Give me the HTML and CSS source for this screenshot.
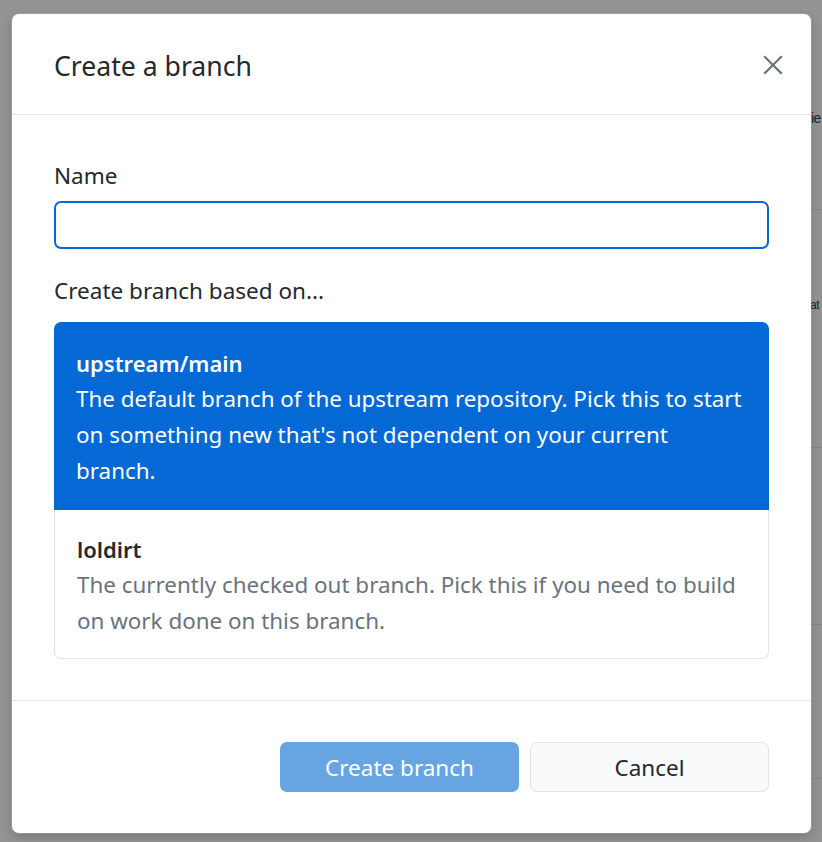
FILE: index.html
```html
<!DOCTYPE html>
<html>
<head>
<meta charset="utf-8">
<link rel="stylesheet" href="styles.css">
</head>
<body>
<div class="app">
  <div class="app-main"></div>
  <div class="app-side">
    <div class="row row-1"><span class="frag">ie</span></div>
    <div class="row row-2"><span class="frag">at</span></div>
    <div class="row row-3"></div>
    <div class="row row-4"></div>
    <div class="row row-5"></div>
  </div>
</div>
<div class="scrim"></div>
<div class="dialog">
  <header class="dialog-header">
    <h1 class="dialog-title">Create a branch</h1>
    <button class="close" aria-label="Close">
      <svg width="20" height="20" viewBox="0 0 20 20"><path d="M2 2 L18 18 M18 2 L2 18" stroke="#6a737d" stroke-width="2.2" stroke-linecap="square" fill="none"/></svg>
    </button>
  </header>
  <div class="dialog-body">
    <label class="label">Name</label>
    <input class="text-input" type="text">
    <div class="label based">Create branch based on...</div>
    <div class="branch-list">
      <div class="branch-item selected">
        <div class="branch-name">upstream/main</div>
        <div class="branch-desc">The default branch of the upstream repository. Pick this to start on something new that's not dependent on your current branch.</div>
      </div>
      <div class="branch-item">
        <div class="branch-name">loldirt</div>
        <div class="branch-desc">The currently checked out branch. Pick this if you need to build on work done on this branch.</div>
      </div>
    </div>
  </div>
  <footer class="dialog-footer">
    <button class="btn btn-primary">Create branch</button>
    <button class="btn btn-secondary">Cancel</button>
  </footer>
</div>
</body>
</html>
```
FILE: styles.css
```css
* { box-sizing: border-box; }
html, body { margin: 0; padding: 0; }
body {
  width: 822px;
  height: 842px;
  overflow: hidden;
  position: relative;
  font-family: "Noto Sans", "Open Sans", sans-serif;
  color: #24292e;
  background: #fff;
}
.app {
  display: flex;
  height: 842px;
  background: #fff;
}
.app-main { width: 600px; }
.app-side {
  flex: 1;
  display: flex;
  flex-direction: column;
  overflow: hidden;
}
.row {
  border-bottom: 1px solid #e4e8ef;
  padding-left: 211px;
  font-family: "Liberation Sans", sans-serif;
  font-size: 14px;
  line-height: 20px;
  letter-spacing: -0.5px;
  white-space: nowrap;
}
.row-1 { height: 210px; padding-top: 108px; }
.row-2 { height: 238px; padding-top: 85px; padding-left: 210px; font-size: 12px; }
.row-3 { height: 177px; }
.row-4 { height: 154px; }
.row-5 { flex: 1; border-bottom: none; }
.frag { color: #2a3b5c; }
.scrim {
  position: absolute;
  inset: 0;
  background: rgba(0, 0, 0, 0.42);
}
.dialog {
  position: absolute;
  left: 12px;
  top: 14px;
  width: 799px;
  height: 819px;
  background: #fff;
  border-radius: 7px;
  box-shadow: 0 0 0 1px rgba(255,255,255,0.15), 0 4px 12px rgba(0,0,0,0.2);
  display: flex;
  flex-direction: column;
}
.dialog-header {
  height: 101px;
  border-bottom: 1px solid #e1e4e8;
  display: flex;
  align-items: center;
  justify-content: space-between;
  padding: 4px 28px 0 42px;
  flex: none;
}
.dialog-title {
  margin: 0;
  font-size: 26.6px;
  font-weight: 400;
  color: #24292e;
}
.close {
  border: none;
  background: transparent;
  padding: 0;
  width: 20px;
  height: 20px;
  display: flex;
  margin-top: -2px;
}
.dialog-body {
  flex: 1;
  padding: 46px 42px 41px;
  display: flex;
  flex-direction: column;
}
.label {
  font-size: 22.5px;
  line-height: 30px;
  color: #24292e;
  margin-bottom: 10px;
}
.text-input {
  height: 48px;
  border: 2px solid #0669d5;
  border-radius: 7px;
  outline: none;
  font: inherit;
  width: 100%;
}
.based {
  margin-top: 27px;
  margin-bottom: 16px;
}
.branch-list {
  display: flex;
  flex-direction: column;
}
.branch-item {
  padding: 21px 22px 19px;
  font-size: 22.4px;
  line-height: 36px;
  border: 1px solid #e1e4e8;
  border-top: none;
  border-radius: 0 0 7px 7px;
}
.branch-item.selected {
  background: #0469d5;
  color: #fff;
  border: none;
  border-radius: 7px 7px 0 0;
  padding: 23px 22px 21px;
}
.branch-name {
  font-weight: 600;
  font-size: 22px;
}
.branch-item .branch-desc { color: #6a737d; }
.branch-item.selected .branch-desc { color: #fff; }
.dialog-footer {
  flex: none;
  height: 133px;
  border-top: 1px solid #e1e4e8;
  display: flex;
  justify-content: flex-end;
  align-items: center;
  gap: 11px;
  padding: 0 42px;
}
.btn {
  width: 239px;
  height: 50px;
  border-radius: 7px;
  font-family: inherit;
  font-size: 22.5px;
  padding: 0;
}
.btn-primary {
  background: #67a5e2;
  color: #fff;
  border: none;
}
.btn-secondary {
  background: #f9fafb;
  border: 1px solid #e1e4e8;
  color: #24292e;
}
```
